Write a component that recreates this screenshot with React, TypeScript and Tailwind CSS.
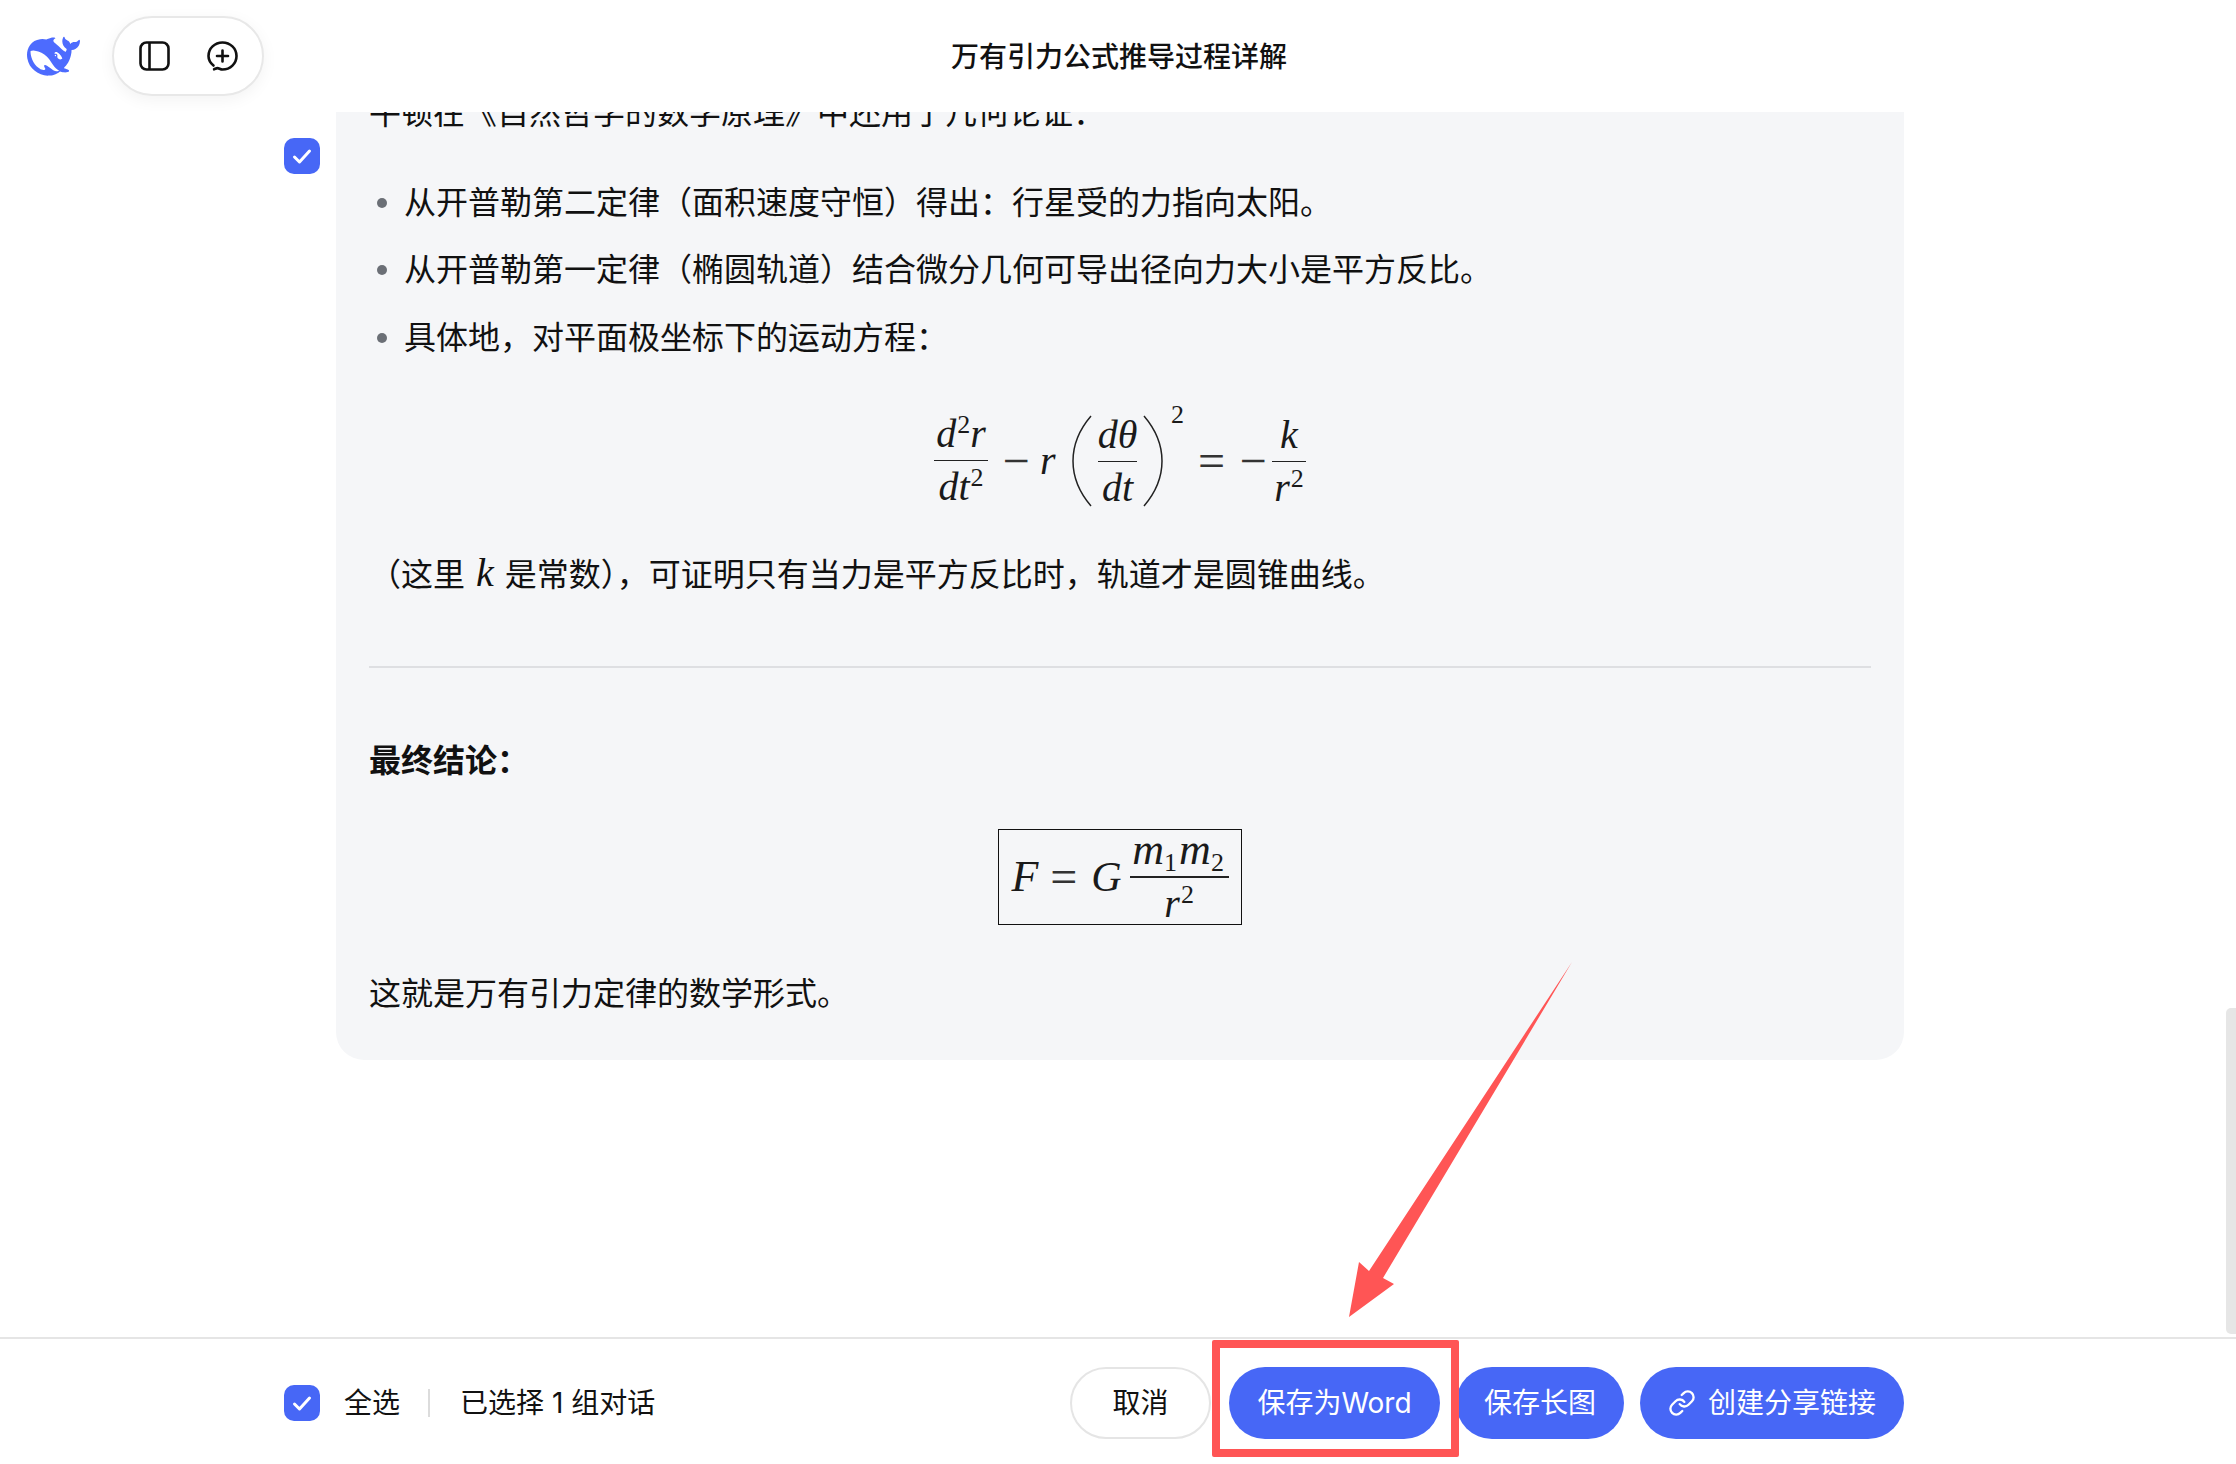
import React from "react";
import { Link } from "lucide-react";

const SANS = "font-['Inter','Noto_Sans_CJK_SC',sans-serif]";

const CheckBox = ({ className }: { className?: string }) => (
  <div className={`flex h-9 w-9 shrink-0 items-center justify-center rounded-[10px] bg-[#4767f6] ${className ?? ""}`}>
    <svg width="20" height="17" viewBox="0 0 20 17" fill="none">
      <path d="M2.5 9 7.5 14 17.5 3" stroke="#fff" strokeWidth="3" strokeLinecap="round" strokeLinejoin="round" />
    </svg>
  </div>
);

const Whale = () => (
  <svg width="53" height="53" viewBox="0 0 24 24" fill="#4d6bfe">
    <path d="M23.748 4.482c-.254-.124-.364.113-.512.234-.051.039-.094.09-.137.136-.372.397-.806.657-1.373.626-.829-.046-1.537.214-2.163.848-.133-.782-.575-1.248-1.247-1.548-.352-.156-.708-.311-.955-.65-.172-.241-.219-.51-.305-.774-.055-.16-.11-.323-.293-.35-.2-.031-.278.136-.356.276-.313.572-.434 1.202-.422 1.84.027 1.436.633 2.58 1.838 3.393.137.093.172.187.129.323-.082.28-.18.552-.266.833-.055.179-.137.217-.329.14a5.526 5.526 0 01-1.736-1.18c-.857-.828-1.631-1.742-2.597-2.458a11.365 11.365 0 00-.689-.471c-.985-.957.13-1.743.388-1.836.27-.098.093-.432-.779-.428-.872.004-1.67.295-2.687.684a3.055 3.055 0 01-.465.137 9.597 9.597 0 00-2.883-.102c-1.885.21-3.39 1.102-4.497 2.623C.082 8.606-.231 10.684.152 12.85c.403 2.284 1.569 4.175 3.36 5.653 1.858 1.533 3.997 2.284 6.438 2.14 1.482-.085 3.133-.284 4.994-1.86.47.234.962.327 1.78.397.63.059 1.236-.03 1.705-.128.735-.156.684-.837.419-.961-2.155-1.004-1.682-.595-2.113-.926 1.096-1.296 2.746-2.642 3.392-7.003.05-.347.007-.565 0-.845-.004-.17.035-.237.23-.256a4.173 4.173 0 001.545-.475c1.396-.763 1.96-2.015 2.093-3.517.02-.23-.004-.467-.247-.588zM11.581 18c-2.089-1.642-3.102-2.183-3.52-2.16-.392.024-.321.471-.235.763.09.288.207.486.371.739.114.167.192.416-.113.603-.673.416-1.842-.14-1.897-.167-1.361-.802-2.5-1.86-3.301-3.307-.774-1.393-1.224-2.887-1.298-4.482-.02-.386.093-.522.477-.592a4.696 4.696 0 011.529-.039c2.132.312 3.946 1.265 5.468 2.774.868.86 1.525 1.887 2.202 2.891.72 1.066 1.494 2.082 2.48 2.914.348.292.625.514.891.677-.802.09-2.14.11-3.054-.614zm1-6.44a.306.306 0 01.415-.287.302.302 0 01.2.288.306.306 0 01-.31.307.303.303 0 01-.305-.308zm3.11 1.596c-.2.081-.399.151-.59.16a1.245 1.245 0 01-.798-.254c-.274-.23-.47-.358-.552-.758a1.73 1.73 0 01.016-.588c.07-.327-.008-.537-.239-.727-.187-.156-.426-.199-.688-.199a.559.559 0 01-.254-.078c-.11-.054-.2-.19-.114-.358.028-.054.16-.186.192-.21.356-.202.767-.136 1.146.016.352.144.618.408 1.001.782.391.451.462.576.685.914.176.265.336.537.445.848.067.195-.019.354-.25.452z" />
  </svg>
);

const Header = () => (
  <header className="relative z-10 flex h-[112px] shrink-0 items-center bg-white">
    <div className="ml-[27px] flex w-[53px] items-center justify-center"><Whale /></div>
    <div className="ml-[32px] flex h-[80px] w-[152px] items-center justify-center gap-[37px] rounded-full border-2 border-[#e8e8e8] bg-white shadow-[0_4px_16px_rgba(0,0,0,0.05)]">
      <svg width="31" height="30" viewBox="0 0 31 30" fill="none" stroke="#111" strokeWidth="2.6">
        <rect x="1.5" y="1.5" width="28" height="27" rx="6" />
        <path d="M10.5 1.5v27" />
      </svg>
      <svg width="31" height="30" viewBox="0 0 31 30" fill="none" stroke="#111" strokeWidth="2.6" strokeLinecap="round">
        <path d="M6.5 24.5C3.4 22 1.5 18.8 1.5 15 1.5 7.5 7.7 1.5 15.5 1.5S29.5 7.5 29.5 15 23.3 28.5 15.5 28.5c-2.2 0-3.4-1.4-5-1.4-1.3 0-2.2.8-3.4 1.2" />
        <path d="M15.5 9.5v11M10 15h11" />
      </svg>
    </div>
    <h1 className="absolute left-[2px] right-0 top-[37px] text-center text-[28px] font-medium leading-[40px] text-[#111]">万有引力公式推导过程详解</h1>
  </header>
);

const Sup = ({ children }: { children: React.ReactNode }) => (
  <span className="relative top-[-14px] ml-[1px] text-[26px] not-italic">{children}</span>
);

const Sub = ({ children }: { children: React.ReactNode }) => (
  <span className="relative top-[7px] mr-[2px] text-[26px] not-italic">{children}</span>
);

const Frac = ({ top, bottom, w }: { top: React.ReactNode; bottom: React.ReactNode; w: string }) => (
  <span className={`inline-flex shrink-0 flex-col items-center ${w}`}>
    <span className="h-[44px] whitespace-nowrap leading-[44px]">{top}</span>
    <span className="my-[4px] h-[1.5px] w-full bg-[#222]" />
    <span className="h-[44px] whitespace-nowrap leading-[44px]">{bottom}</span>
  </span>
);

const Op = ({ children, className }: { children: React.ReactNode; className: string }) => (
  <span className={`flex justify-center text-[48px] leading-none text-[#333] ${className}`}>{children}</span>
);

const Serif = "font-['Liberation_Serif',serif] text-[40px] text-[#1a1a1a]";

const Motion = () => (
  <div className={`flex h-[116px] items-center justify-center ${Serif}`}>
    <Frac w="w-[54px]" top={<i>d<Sup>2</Sup>r</i>} bottom={<i>dt<Sup>2</Sup></i>} />
    <Op className="ml-[16px] w-[24px]">−</Op>
    <i className="ml-[12px] w-[16px]">r</i>
    <svg className="ml-[16px]" width="20" height="92" viewBox="0 0 20 92" fill="none" stroke="#222" strokeWidth="1.5">
      <path d="M19 1C7 15 1 29 1 46s6 31 18 45" />
    </svg>
    <span className="ml-[6px]"><Frac w="w-[39px]" top={<i>dθ</i>} bottom={<i>dt</i>} /></span>
    <svg className="ml-[6px]" width="20" height="92" viewBox="0 0 20 92" fill="none" stroke="#222" strokeWidth="1.5">
      <path d="M1 1c12 14 18 28 18 45s-6 31-18 45" />
    </svg>
    <span className="relative top-[-46px] ml-[8px] w-[12px] text-[26px]">2</span>
    <Op className="ml-[15px] w-[27px]">=</Op>
    <Op className="ml-[16px] w-[24px]">−</Op>
    <span className="ml-[7px]"><Frac w="w-[34px]" top={<i>k</i>} bottom={<i>r<Sup>2</Sup></i>} /></span>
  </div>
);

const Boxed = () => (
  <div className="flex justify-center">
    <div className={`flex h-[96px] w-[244px] items-center justify-center border-[1.5px] border-[#111] ${Serif}`}>
      <i className="text-[44px]">F</i>
      <Op className="ml-[12px] w-[27px]">=</Op>
      <i className="ml-[14px] text-[42px]">G</i>
      <span className="ml-[8px]">
        <Frac
          w="w-[99px]"
          top={<i className="text-[44px]">m<Sub>1</Sub>m<Sub>2</Sub></i>}
          bottom={<i>r<Sup>2</Sup></i>}
        />
      </span>
    </div>
  </div>
);

const Bullet = ({ children }: { children: React.ReactNode }) => (
  <li className="flex h-[67.5px] items-center">
    <span className="ml-[8px] mr-[17px] h-[10px] w-[10px] rounded-full bg-[#6b6f76]" />
    {children}
  </li>
);

const Article = () => (
  <div className="flex flex-1 justify-end overflow-hidden pr-[332px]">
    <div className="mr-[16px] mt-[26px] flex w-[36px]"><CheckBox /></div>
    <article className="flex h-[948px] w-[1568px] flex-col rounded-b-[28px] bg-[#f5f6f8] px-[33px] text-[32px] leading-[48px] text-[#111]">
      <p className="mt-[-23px] h-[48px] whitespace-nowrap">牛顿在《自然哲学的数学原理》中还用了几何论证：</p>
      <ul className="mt-[32px]">
        <Bullet>从开普勒第二定律（面积速度守恒）得出：行星受的力指向太阳。</Bullet>
        <Bullet>从开普勒第一定律（椭圆轨道）结合微分几何可导出径向力大小是平方反比。</Bullet>
        <Bullet>具体地，对平面极坐标下的运动方程：</Bullet>
      </ul>
      <div className="mt-[31px]"><Motion /></div>
      <p className="mt-[32px] h-[48px] whitespace-nowrap">（这里 <i className="mx-[2px] font-['Liberation_Serif',serif] text-[40px] leading-none">k</i> 是常数），可证明只有当力是平方反比时，轨道才是圆锥曲线。</p>
      <hr className="mt-[67px] border-t-2 border-[#dedfe2]" />
      <p className="mt-[69px] font-bold">最终结论：</p>
      <div className="mt-[44px]"><Boxed /></div>
      <p className="mt-[45px]">这就是万有引力定律的数学形式。</p>
    </article>
  </div>
);

const Footer = () => (
  <footer className="flex h-[127px] shrink-0 items-center border-t-2 border-[#e5e5e5] bg-white pl-[284px] pr-[332px] pt-[3px] text-[28px] text-[#111]">
    <CheckBox />
    <span className="ml-[24px]">全选</span>
    <span className="ml-[28px] mr-[30px] h-[28px] w-[2px] bg-[#dcdcdc]" />
    <span>已选择 1 组对话</span>
    <div className="ml-auto flex items-center text-white">
      <button className="mr-[18px] h-[72px] w-[141px] rounded-full border-2 border-[#e5e5e5] text-[#111]">取消</button>
      <button className="mr-[16px] h-[72px] w-[211px] rounded-full bg-[#4767f6]">保存为Word</button>
      <button className="mr-[16px] h-[72px] w-[168px] rounded-full bg-[#4767f6]">保存长图</button>
      <button className="flex h-[72px] w-[264px] items-center justify-center gap-[12px] rounded-full bg-[#4767f6]">
        <Link size={28} strokeWidth={2} />
        创建分享链接
      </button>
    </div>
  </footer>
);

export default function App() {
  return (
    <div className={`relative flex h-[1464px] w-[2236px] flex-col overflow-hidden bg-white ${SANS}`}>
      <Header />
      <Article />
      <Footer />
      {/* scrollbar */}
      <div className="absolute right-0 top-[1008px] h-[326px] w-[10px] rounded-l-[5px] bg-[#e6e6e6]" />
      {/* red annotation */}
      <div className="absolute left-[1212px] top-[1340px] h-[117px] w-[247px] rounded-[2px] border-[8px] border-[#ff5555]" />
      <svg className="absolute left-0 top-0" width="2236" height="1464" fill="#ff5555">
        <polygon points="1572,962 1383,1278 1394,1284 1349,1317 1359,1262 1369,1271" />
      </svg>
    </div>
  );
}
